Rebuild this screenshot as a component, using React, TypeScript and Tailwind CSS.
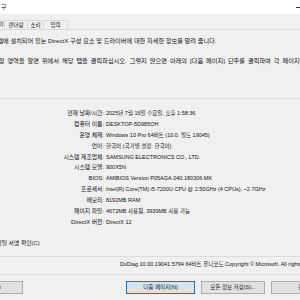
const rows: [string, string][] = [
  ["현재 날짜/시간:", "2025년 7월 16일 수요일, 오후 1:58:36"],
  ["컴퓨터 이름:", "DESKTOP-5D985OH"],
  ["운영 체제:", "Windows 10 Pro 64비트 (10.0, 빌드 19045)"],
  ["언어:", "한국어 (국가별 설정: 한국어)"],
  ["시스템 제조업체:", "SAMSUNG ELECTRONICS CO., LTD."],
  ["시스템 모델:", "900X5N"],
  ["BIOS:", "AMIBIOS Version P05AGA.040.180306.MK"],
  ["프로세서:", "Intel(R) Core(TM) i5-7200U CPU @ 2.50GHz (4 CPUs), ~2.7GHz"],
  ["메모리:", "8192MB RAM"],
  ["페이지 파일:", "4672MB 사용됨, 3939MB 사용 가능"],
  ["DirectX 버전:", "DirectX 12"],
]

export default function App() {
  return (
    <div className="w-[300px] h-[300px] overflow-hidden bg-[#f0f0f0] text-[#111] text-[5.5px] font-['Liberation_Sans','Noto_Sans_CJK_KR',sans-serif] whitespace-nowrap">
      {/* title bar */}
      <div className="h-[14px] bg-white flex items-center justify-between">
        <span className="pl-[1px] text-[6px] leading-[7px]">구</span>
        <span className="w-[5px] h-px bg-[#333] mr-[-1px]" />
      </div>

      {/* tabs */}
      <div className="h-[16px] flex items-end border-b border-[#d9d9d9]">
        <div className="h-[9px] w-[5px] flex items-center justify-end border-r border-[#d9d9d9] leading-[7px]">
          <span className="mr-[0.5px]">이</span>
        </div>
        <div className="h-[9px] w-[23px] flex items-center justify-center border-r border-t border-[#d9d9d9] leading-[7px]">
          렌더링
        </div>
        <div className="h-[9px] w-[16px] flex items-center justify-center border-r border-t border-[#d9d9d9] leading-[7px]">
          소리
        </div>
        <div className="h-[9px] w-[24px] flex items-center justify-center border-r border-t border-[#d9d9d9] leading-[7px]">
          입력
        </div>
      </div>

      {/* description */}
      <div className="mt-[6.5px] text-[6.2px] leading-[7px] ml-[-14px]">
        시스템에 설치되어 있는 DirectX 구성 요소 및 드라이버에 대한 자세한 정보를 알려 줍니다.
      </div>
      <div className="mt-[13px] text-[6.2px] leading-[7px] ml-[-7px] [word-spacing:1.3px]">
        특정 영역을 알면 위에서 해당 탭을 클릭하십시오. 그렇지 않으면 아래의 [다음 페이지] 단추를 클릭하여 각 페이지를 차례로 확인하십시오.
      </div>

      <div className="mt-[34px] h-px bg-[#dcdcdc]" />

      {/* system info */}
      <div className="mt-[9.5px] grid grid-cols-[104px_1fr] gap-x-[2px]">
        {rows.map(([label, value]) => (
          <div key={label} className="contents">
            <div className="h-[10.9px] flex items-center justify-end text-[5.8px] leading-[7px]">{label}</div>
            <div className="h-[10.9px] flex items-center leading-[7px]">{value}</div>
          </div>
        ))}
      </div>

      <div className="mt-[12px] text-[5.8px] leading-[7px] ml-[-9px]">디지털 서명 확인(C)</div>

      <div className="mt-[9.5px] h-px bg-[#dcdcdc]" />

      <div className="mt-[3.5px] leading-[7px] ml-[120px]">
        DxDiag 10.00.19041.5794 64비트 유니코드 Copyright © Microsoft. All rights reserved.
      </div>

      <div className="mt-[6.5px] h-px bg-[#dcdcdc]" />

      {/* buttons */}
      <div className="mt-[6px] flex h-[13px]">
        <div className="shrink-0 ml-[-44px] w-[67px] h-[13px] flex items-center justify-center bg-[#e1e1e1] border border-[#adadad] leading-[7px]">
          도움말(H)
        </div>
        <div className="shrink-0 ml-[103px] w-[69px] h-[13px] flex items-center justify-center bg-[#e1e1e1] border border-[#0078d7] leading-[7px]">
          다음 페이지(N)
        </div>
        <div className="shrink-0 ml-[6px] w-[64px] h-[13px] flex items-center justify-center bg-[#e1e1e1] border border-[#adadad] leading-[7px]">
          모든 정보 저장(S)...
        </div>
        <div className="shrink-0 ml-[6px] w-[72px] h-[13px] flex items-center justify-center bg-[#e1e1e1] border border-[#adadad] leading-[7px]">
          종료(X)
        </div>
      </div>
    </div>
  )
}
